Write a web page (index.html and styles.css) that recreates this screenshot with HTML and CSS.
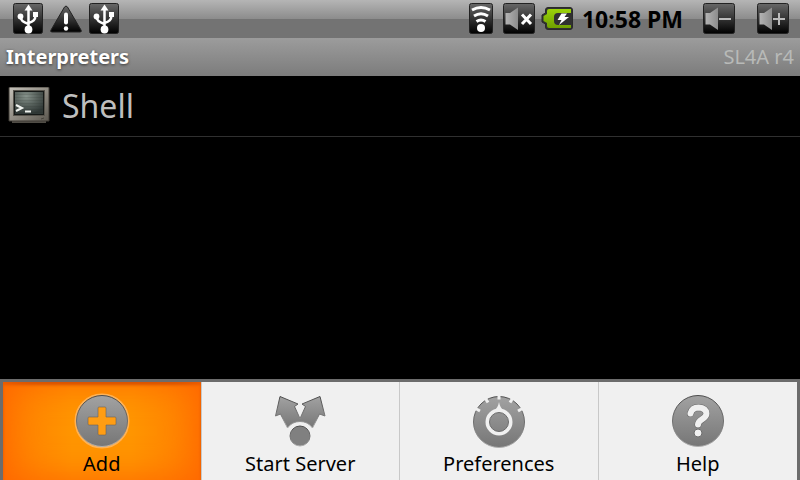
FILE: index.html
```html
<!DOCTYPE html>
<html lang="en">
<head>
<meta charset="utf-8">
<meta name="viewport" content="width=device-width, initial-scale=1">
<title>Interpreters</title>
<link rel="stylesheet" href="styles.css">
</head>
<body>
<svg class="defs" width="0" height="0" aria-hidden="true">
  <defs>
    <linearGradient id="tile" x1="0" y1="0" x2="0" y2="1">
      <stop offset="0" stop-color="#686868"/><stop offset=".5" stop-color="#343434"/><stop offset="1" stop-color="#000"/>
    </linearGradient>
    <linearGradient id="speaker" x1="0" y1="0" x2="1" y2="0">
      <stop offset="0" stop-color="#b4b4b4"/><stop offset="1" stop-color="#8c8c8c"/>
    </linearGradient>
    <linearGradient id="green" x1="0" y1="0" x2="0" y2="1">
      <stop offset="0" stop-color="#9bd30a"/><stop offset="1" stop-color="#6fa000"/>
    </linearGradient>
    <linearGradient id="grey" x1="0" y1="0" x2="0" y2="1">
      <stop offset="0" stop-color="#a2a2a2"/><stop offset="1" stop-color="#767676"/>
    </linearGradient>
    <linearGradient id="rim" x1="0" y1="0" x2="0" y2="1">
      <stop offset="0" stop-color="#4c4c4c"/><stop offset=".6" stop-color="#757575"/><stop offset="1" stop-color="#b0b0b0"/>
    </linearGradient>
    <linearGradient id="case" x1="0" y1="0" x2="1" y2="1">
      <stop offset="0" stop-color="#c5c2ba"/><stop offset=".5" stop-color="#928e85"/><stop offset="1" stop-color="#5c5850"/>
    </linearGradient>
    <radialGradient id="screen" cx=".4" cy=".2" r=".8">
      <stop offset="0" stop-color="#87938c"/><stop offset=".5" stop-color="#58625d"/><stop offset="1" stop-color="#303836"/>
    </radialGradient>
    <symbol id="usb" viewBox="0 0 30 31">
      <rect x=".5" y=".5" width="29" height="30" rx="2" fill="url(#tile)" stroke="#222"/>
      <path d="M15.500 26V5M15.500 21C11 19.500 7.500 18 7.500 14M15.500 20C20 18.500 22.500 17 22.500 12" fill="none" stroke="#fff" stroke-width="2.500"/>
      <path d="M15.500 1.500 19.500 7.500H11.500Z" fill="#fff"/>
      <circle cx="7.500" cy="13.500" r="2.900" fill="#fff"/>
      <rect x="20" y="9" width="5" height="5" fill="#fff"/>
      <circle cx="15.500" cy="26.500" r="3.900" fill="#fff"/>
    </symbol>
  </defs>
</svg>

<header class="status">
  <div class="notices">
    <svg class="usb" role="img" aria-label="USB connected"><use href="#usb"/></svg>
    <svg class="warn" viewBox="0 0 32 28" role="img" aria-label="Warning">
      <path d="M14.500 2Q16 0 17.500 2L31 25Q32 27 30 27H2Q0 27 1 25Z" fill="url(#tile)" stroke="#222"/>
      <path d="M16 9.500V17.500" stroke="#fff" stroke-width="4" stroke-linecap="round"/>
      <circle cx="16" cy="23.500" r="2.200" fill="#fff"/>
    </svg>
    <svg class="usb" role="img" aria-label="USB debugging"><use href="#usb"/></svg>
  </div>
  <div class="system">
    <svg class="wifi" viewBox="0 0 24 31" role="img" aria-label="Wi-Fi">
      <rect x=".5" y=".5" width="23" height="30" rx="2" fill="url(#tile)" stroke="#222"/>
      <g fill="none" stroke="#fff" stroke-width="3">
        <path d="M3 7Q12 2 21 7M5 13Q12 8.500 19 13M7.500 18.500Q12 15.500 16.500 18.500"/>
      </g>
      <circle cx="12" cy="25" r="4" fill="#fff"/>
    </svg>
    <svg class="tile" viewBox="0 0 32 31" role="img" aria-label="Sound muted">
      <rect x=".5" y=".5" width="31" height="30" rx="2" fill="url(#tile)" stroke="#222"/>
      <path d="M2.500 10H7L15 4.500V27L7 21.500H2.500Z" fill="url(#speaker)"/>
      <path d="M19 11.500 28 21M28 11.500 19 21" stroke="#fff" stroke-width="3"/>
    </svg>
    <svg class="battery" viewBox="0 0 32 23" role="img" aria-label="Battery charging">
      <path d="M7 .5H29Q31.500 .5 31.500 3V20Q31.500 22.500 29 22.500H7Q4.500 22.500 4.500 20V17L1 15V8L4.500 6V3Q4.500 .5 7 .5Z" fill="#303030" stroke="#2a2a2a"/>
      <path d="M8 2H30V6H17Q13 6 13 10V14Q13 18 17 18H30V21H8Q6 21 6 19V16L2.500 14V9L6 7V4Q6 2 8 2Z" fill="url(#green)"/>
      <path d="M20.500 6.500H26L23.500 10H28L18 18 20.500 13H16.500Z" fill="#fff"/>
    </svg>
    <time class="clock">10:58 PM</time>
    <button class="volume" type="button" aria-label="Volume down">
      <svg class="tile" viewBox="0 0 32 31">
        <rect x=".5" y=".5" width="31" height="30" rx="2" fill="url(#tile)" stroke="#222"/>
        <path d="M2.500 10H7L15 4.500V27L7 21.500H2.500Z" fill="url(#speaker)"/>
        <path d="M16 16H28" stroke="#bbb" stroke-width="2"/>
      </svg>
    </button>
    <button class="volume" type="button" aria-label="Volume up">
      <svg class="tile" viewBox="0 0 32 31">
        <rect x=".5" y=".5" width="31" height="30" rx="2" fill="url(#tile)" stroke="#222"/>
        <path d="M2.500 10H7L15 4.500V27L7 21.500H2.500Z" fill="url(#speaker)"/>
        <path d="M16 16H28M22 10V22" stroke="#bbb" stroke-width="2"/>
      </svg>
    </button>
  </div>
</header>

<div class="titlebar">
  <h1 class="title">Interpreters</h1>
  <span class="version">SL4A r4</span>
</div>

<main class="content">
  <ul class="list">
    <li class="row">
      <svg class="terminal" viewBox="0 0 42 38" aria-hidden="true">
        <path d="M4 34H38V36H4Z" fill="#504d46"/>
        <path d="M2 0H40Q41 0 41 1V34H1V1Q1 0 2 0Z" fill="url(#case)" stroke="#3e3b35"/>
        <rect x="5.500" y="3.500" width="31" height="25" fill="#161a18" stroke="#57544c"/>
        <rect x="7" y="5" width="28" height="22" fill="url(#screen)"/>
        <path d="M7 7.500H35M7 10.500H35M7 13.500H35M7 16.500H35M7 19.500H35M7 22.500H35M7 25.500H35" stroke="#26302b" stroke-opacity=".15"/>
        <path d="M8 18 14 21 8 24M17 24.500H23" fill="none" stroke="#f0f3ef" stroke-width="2"/>
        <path d="M33 32 36 31" stroke="#45423b"/>
      </svg>
      <span class="name">Shell</span>
    </li>
  </ul>
</main>

<nav class="menu">
  <button class="item selected" type="button">
    <svg class="icon" viewBox="0 0 56 56" aria-hidden="true">
      <circle class="halo" cx="28" cy="28" r="26.500"/>
      <circle cx="28" cy="28" r="25.500" fill="url(#grey)" stroke="url(#rim)"/>
      <path d="M25 14H31Q32 14 32 15V24H41Q42 24 42 25V31Q42 32 41 32H32V41Q32 42 31 42H25Q24 42 24 41V32H15Q14 32 14 31V25Q14 24 15 24H24V15Q24 14 25 14Z" fill="#ff9d13" stroke="#6c6357" stroke-opacity=".6"/>
    </svg>
    <span>Add</span>
  </button>
  <button class="item" type="button">
    <svg class="icon" viewBox="0 0 56 56" aria-hidden="true">
      <path d="M8 3.500 26 11 22.500 13.500 28 25.500 33.500 13.500 30 11 48 3.500 53 23 47.500 21 40.500 35Q36 28.500 28 28.500T15.500 35L8.500 21 3.500 23Z" fill="url(#grey)" stroke="url(#rim)" stroke-linejoin="round"/>
      <circle cx="28" cy="43" r="10" fill="#808080" stroke="url(#rim)"/>
    </svg>
    <span>Start Server</span>
  </button>
  <button class="item" type="button">
    <svg class="icon" viewBox="0 0 56 56" aria-hidden="true">
      <circle cx="28" cy="29" r="25.500" fill="url(#grey)" stroke="url(#rim)"/>
      <path d="M28 2V6.500M14.500 5.500 17 9.500M41.500 5.500 39 9.500M4.500 15.500 9 18M51.500 15.500 47 18" stroke="#f0f0f0" stroke-width="3"/>
      <path d="M28 9Q29 15 33.500 18.500H22.500Q27 15 28 9Z" fill="#f0f0f0"/>
      <circle cx="28" cy="29" r="11.500" fill="none" stroke="#f0f0f0" stroke-width="4"/>
      <circle cx="28" cy="29" r="9.500" fill="none" stroke="#6d6d6d"/>
    </svg>
    <span>Preferences</span>
  </button>
  <button class="item" type="button">
    <svg class="icon" viewBox="0 0 56 56" aria-hidden="true">
      <circle cx="28" cy="28" r="25.500" fill="url(#grey)" stroke="url(#rim)"/>
      <g fill="none" stroke-linecap="round" stroke-linejoin="round">
        <path d="M20.500 20.500Q22 14.500 28.500 14.500Q36 15 36.500 20.500C36.500 26 28 26.500 28 31.500" stroke="#666" stroke-width="7"/>
        <path d="M20.500 20.500Q22 14.500 28.500 14.500Q36 15 36.500 20.500C36.500 26 28 26.500 28 31.500" stroke="#f0f0f0" stroke-width="6"/>
      </g>
      <circle cx="28" cy="40" r="4" fill="#f0f0f0" stroke="#6c6c6c"/>
    </svg>
    <span>Help</span>
  </button>
</nav>
</body>
</html>
```
FILE: styles.css
```css
* {
  box-sizing: border-box;
}

body {
  margin: 0;
  min-height: 100vh;
  display: flex;
  flex-direction: column;
  background: #000;
  font-family: "Noto Sans", "Open Sans", sans-serif;
}

svg {
  display: block;
  flex: none;
}

button {
  margin: 0;
  padding: 0;
  border: 0;
  background: none;
  font: inherit;
}

.defs {
  position: absolute;
}

.status {
  display: flex;
  justify-content: space-between;
  align-items: center;
  height: 38px;
  padding: 0 11px 1px 13px;
  background: linear-gradient(#b5b5b5, #8c8c8c 50%, #737373 50%, #737373);
}

.notices {
  display: flex;
  align-items: center;
  gap: 7px;
}

.system {
  display: flex;
  align-items: center;
}

.usb {
  width: 30px;
  height: 31px;
}

.warn {
  width: 32px;
  height: 28px;
}

.wifi {
  width: 24px;
  height: 31px;
  margin-right: 10px;
}

.tile {
  width: 32px;
  height: 31px;
}

.battery {
  width: 32px;
  height: 23px;
  margin: 0 9px 0 6px;
}

.clock {
  color: #000;
  font-size: 23px;
  line-height: 38px;
  font-weight: 700;
}

.volume {
  margin-left: 20px;
}

.volume + .volume {
  margin-left: 22px;
}

.titlebar {
  display: flex;
  justify-content: space-between;
  align-items: center;
  height: 38px;
  padding: 0 6px;
  background: linear-gradient(#9c9c9c, #7c7c7c);
}

.title {
  margin: 0;
  color: #fff;
  font-size: 20px;
  line-height: 38px;
  font-weight: 700;
  text-shadow: 0 1px 3px #333;
}

.version {
  color: #b8bab8;
  font-size: 20px;
  line-height: 38px;
}

.content {
  flex: 1;
}

.list {
  margin: 0;
  padding: 0;
  list-style: none;
}

.row {
  display: flex;
  align-items: center;
  gap: 12px;
  height: 61px;
  padding: 0 8px;
  border-bottom: 1px solid #303030;
}

.terminal {
  width: 42px;
  height: 38px;
}

.name {
  color: #bebebe;
  font-size: 32px;
  line-height: 60px;
}

.menu {
  display: grid;
  grid-template-columns: repeat(4, 1fr);
  border: 3px solid #6c6c6c;
  border-bottom: 0;
  background: #f0f0f0;
}

.item {
  display: flex;
  flex-direction: column;
  align-items: center;
  height: 98px;
  padding-top: 11px;
  border-right: 1px solid #c8c8c8;
  color: #000;
  font-size: 20px;
  line-height: 30px;
}

.item:last-child {
  border-right: 0;
}

.selected {
  background: linear-gradient(90deg, #ff7c00, #ff9500 35%, #ff9500 65%, #ff7c00);
  box-shadow: inset 0 0 36px #ff6400, inset 0 3px 3px #b84600;
}

.icon {
  width: 56px;
  height: 56px;
}

.halo {
  fill: none;
  stroke: #ffb255;
  stroke-width: 2px;
}
```
